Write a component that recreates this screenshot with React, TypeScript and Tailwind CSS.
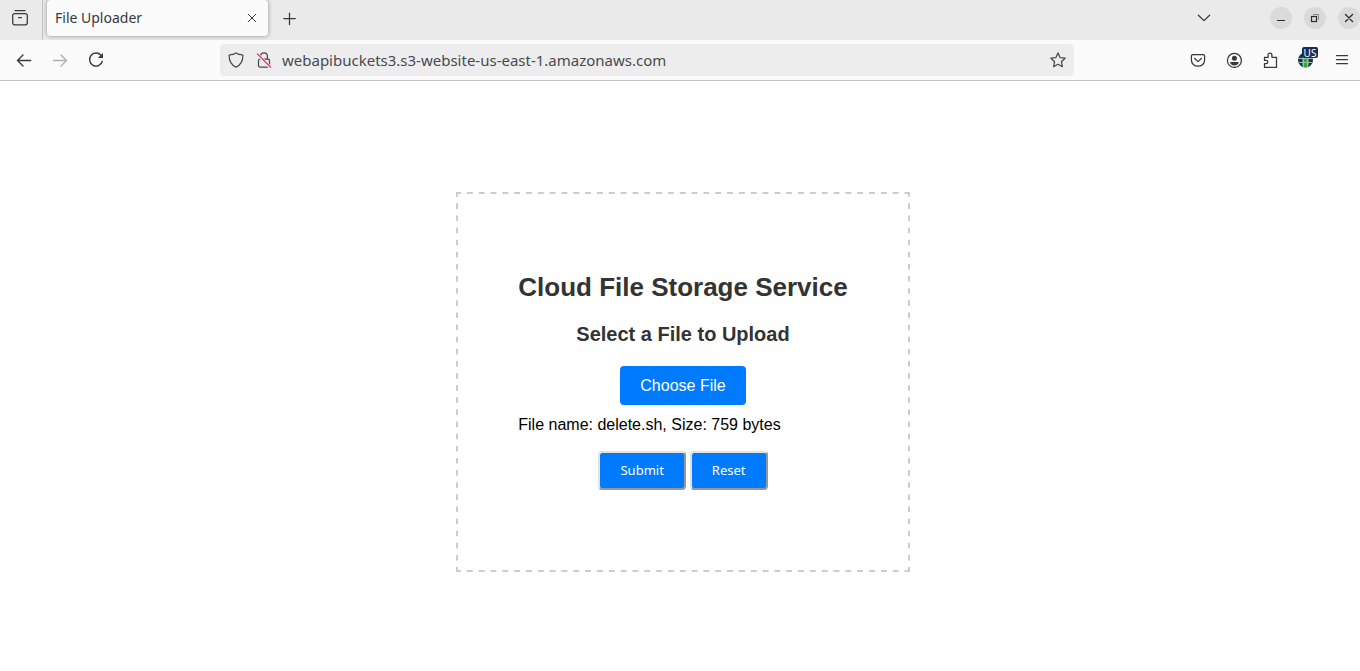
import { useRef, useState } from "react";
import type { ReactNode } from "react";

function Icon({ children, className = "" }: { children: ReactNode; className?: string }) {
  return (
    <svg
      viewBox="0 0 16 16"
      width="16"
      height="16"
      fill="none"
      stroke="currentColor"
      strokeWidth="1.25"
      strokeLinecap="round"
      strokeLinejoin="round"
      className={className}
      aria-hidden="true"
    >
      {children}
    </svg>
  );
}

function ToolButton({ label, disabled, children }: { label: string; disabled?: boolean; children: ReactNode }) {
  return (
    <button
      type="button"
      aria-label={label}
      disabled={disabled}
      className="flex h-8 w-9 items-center justify-center text-[#38383b] disabled:text-[#b0b0b1]"
    >
      {children}
    </button>
  );
}

function WindowButton({ label, children }: { label: string; children: ReactNode }) {
  return (
    <button
      type="button"
      aria-label={label}
      className="flex size-[22px] items-center justify-center rounded-full bg-[#dadada] text-[#2e2e2e]"
    >
      {children}
    </button>
  );
}

function TabBar() {
  return (
    <div className="flex h-10 bg-[#eaeaea] text-[#38383b]">
      <button
        type="button"
        aria-label="Recent browsing"
        className="flex w-[43px] items-center border-r border-[#c0c0c0] pb-1 pl-3"
      >
        <Icon>
          <path d="M3 .7h10" />
          <rect x=".7" y="3.600" width="14.600" height="11.200" rx="2" />
          <path d="M6.600 7.700h2.800" />
        </Icon>
      </button>
      <div className="ml-1 flex h-9 w-[221px] items-center justify-between rounded bg-[#fbfbfb] pr-2 pl-2 shadow-[0_0_4px_rgba(0,0,0,0.4)]">
        <span className="font-['Noto_Sans',sans-serif] text-sm">File Uploader</span>
        <button type="button" aria-label="Close tab">
          <Icon>
            <path d="M4.200 4.200l7.600 7.600M11.800 4.200l-7.600 7.600" strokeWidth="1" />
          </Icon>
        </button>
      </div>
      <button type="button" aria-label="New tab" className="ml-[14px] flex h-9 items-center">
        <Icon>
          <path d="M7.500 3v11.500M1.800 8.500h11.500" />
        </Icon>
      </button>
      <div className="ml-auto flex h-9 items-center">
        <button type="button" aria-label="List all tabs" className="mr-[58px]">
          <Icon>
            <path d="M2.400 5.200L8 10.600l5.600-5.400" />
          </Icon>
        </button>
        <div className="flex gap-3">
          <WindowButton label="Minimize">
            <Icon>
              <path d="M4 10.500h8" strokeLinecap="butt" strokeWidth="1" />
            </Icon>
          </WindowButton>
          <WindowButton label="Restore">
            <Icon>
              <path d="M6.500 4.500h5v5" stroke="#8a8a8a" strokeWidth="1" strokeLinejoin="miter" />
              <rect x="4.500" y="6.500" width="5" height="5" strokeWidth="1.200" strokeLinejoin="miter" />
            </Icon>
          </WindowButton>
          <WindowButton label="Close">
            <Icon>
              <path d="M4.500 4.500l7 7M11.500 4.500l-7 7" strokeWidth="1.400" />
            </Icon>
          </WindowButton>
        </div>
      </div>
    </div>
  );
}

function AddressBar() {
  const [address, setAddress] = useState("webapibuckets3.s3-website-us-east-1.amazonaws.com");
  return (
    <div className="mx-[106px] flex h-8 min-w-0 flex-1 items-center rounded bg-[#ededed] px-2 text-[#4a4a4d]">
      <Icon className="shrink-0">
        <path d="M8 .9c1.800 1.300 4 1.900 6.400 2 .3 0 .5.2.5.5 0 5.600-2.300 9.600-6.900 11.700C3.400 13 1.100 9 1.100 3.400c0-.3.2-.5.5-.5C4 2.800 6.200 2.200 8 .9z" />
      </Icon>
      <Icon className="ml-3 shrink-0">
        <path d="M4.600 7V4.200a3.400 3.400 0 0 1 6.800 0V7" />
        <rect x="2.500" y="7" width="11" height="8" rx="1.500" />
        <path d="M.9 1.900l13.200 13.200" stroke="#ededed" strokeWidth="3.200" />
        <path d="M1.400 1.900l13.100 13.200" stroke="#e22850" />
      </Icon>
      <input
        type="text"
        aria-label="Address"
        value={address}
        onChange={(event) => setAddress(event.target.value)}
        className="ml-[10px] min-w-0 flex-1 bg-transparent font-['Noto_Sans',sans-serif] text-[15px] outline-none"
      />
      <button type="button" aria-label="Bookmark this page">
        <Icon>
          <path d="M8 .9l2.100 4.700 5 .6-3.700 3.500 1 5L8 12.200l-4.400 2.500 1-5L.9 6.200l5-.6z" />
        </Icon>
      </button>
    </div>
  );
}

function Toolbar() {
  return (
    <div className="flex items-center border-b border-[#c4c4c4] bg-[#fbfbfb] py-1 pl-[6px]">
      <ToolButton label="Back">
        <Icon>
          <path d="M14.600 8.500H1.600M7 3.100L1.500 8.500 7 13.900" strokeWidth="1.400" />
        </Icon>
      </ToolButton>
      <ToolButton label="Forward" disabled>
        <Icon>
          <path d="M1.400 8.500h13M9 3.100l5.500 5.400L9 13.900" strokeWidth="1.400" />
        </Icon>
      </ToolButton>
      <ToolButton label="Reload">
        <Icon>
          <path d="M13 3.300A6.500 6.500 0 1 0 14.300 9.500" strokeWidth="1.400" />
          <path d="M15 1v5.100H9.900z" fill="currentColor" stroke="none" />
        </Icon>
      </ToolButton>
      <AddressBar />
      <ToolButton label="Save to Pocket">
        <Icon>
          <path d="M3 2.500h10c1 0 1.600.6 1.600 1.500v3.900c0 3.700-2.800 6.300-6.600 6.300S1.400 11.600 1.400 7.900V4c0-.9.6-1.500 1.600-1.500z" />
          <path d="M4.700 6.500L8 9.600l3.300-3.100" />
        </Icon>
      </ToolButton>
      <ToolButton label="Account">
        <Icon>
          <circle cx="8.400" cy="8.400" r="7" />
          <circle cx="8.400" cy="6.300" r="2.500" fill="currentColor" stroke="none" />
          <path d="M4.100 9.900h8.600c0 2.200-1.900 3.500-4.300 3.500s-4.300-1.300-4.300-3.500z" fill="currentColor" stroke="none" />
        </Icon>
      </ToolButton>
      <ToolButton label="Extensions">
        <Icon>
          <path d="M2.500 5.300h3.600V2.900a1.900 1.900 0 0 1 3.800 0v2.400h4.600v10h-12v-3.700h1.700a1.600 1.600 0 0 0 0-3.200H2.500z" />
        </Icon>
      </ToolButton>
      <ToolButton label="Location: US">
        <span className="relative">
          <svg viewBox="0 0 16 16" width="16" height="16" fill="none" aria-hidden="true">
            <circle cx="7.500" cy="8" r="7.500" fill="#1c2f55" />
            <path d="M4 4h7v9l-2 2H6l-2-2z" fill="#35a248" />
            <path d="M0 6.500h15M1 10.500h13M5.500 1v14M9.500 1v14" stroke="#9fb9b5" />
          </svg>
          <span className="absolute -top-[5px] left-1 flex h-[11px] w-4 items-center justify-center rounded-[2px] bg-[#162e54] font-['Noto_Sans',sans-serif] text-[10px] leading-none text-white">
            US
          </span>
        </span>
      </ToolButton>
      <ToolButton label="Open menu">
        <Icon>
          <path d="M2.500 3.500h11M2.500 7.500h11M2.500 11.500h11" />
        </Icon>
      </ToolButton>
    </div>
  );
}

const actionButton =
  "h-[39px] rounded border-2 border-t-[#e3e3e3] border-l-[#e3e3e3] border-r-[#979797] border-b-[#979797] bg-[#007bff] px-5 font-['Noto_Sans',sans-serif] text-[13px] text-white";

/* Six-pixel dashes on all four edges, fitted to a whole number of dashes per side. */
const dashedFrame =
  "border-2 border-transparent [background-image:linear-gradient(to_right,#ccc_25%,transparent_25%_75%,#ccc_75%),linear-gradient(to_right,#ccc_25%,transparent_25%_75%,#ccc_75%),linear-gradient(#ccc_25%,transparent_25%_75%,#ccc_75%),linear-gradient(#ccc_25%,transparent_25%_75%,#ccc_75%)] [background-size:12px_2px,12px_2px,2px_12px,2px_12px] [background-repeat:round_no-repeat,round_no-repeat,no-repeat_round,no-repeat_round] [background-position:left_0_top_-2px,left_0_bottom_-2px,left_-2px_top_0,right_-2px_top_0]";

function UploadForm() {
  const input = useRef<HTMLInputElement>(null);
  const [file, setFile] = useState({ name: "delete.sh", size: 759 });

  return (
    <form
      onSubmit={(event) => event.preventDefault()}
      className={`flex flex-col items-center px-[60px] pt-[78px] pb-20 font-['Liberation_Sans',sans-serif] ${dashedFrame}`}
    >
      <h1 className="text-[26px] leading-[30px] font-bold text-[#333333]">Cloud File Storage Service</h1>
      <h2 className="mt-5 text-xl leading-6 font-bold text-[#333333]">Select a File to Upload</h2>
      <button
        type="button"
        onClick={() => input.current?.click()}
        className="mt-5 h-[39px] rounded bg-[#007bff] px-5 text-base text-white"
      >
        Choose File
      </button>
      <input
        ref={input}
        type="file"
        aria-label="File"
        className="hidden"
        onChange={(event) => {
          const chosen = event.target.files?.[0];
          if (chosen) setFile({ name: chosen.name, size: chosen.size });
        }}
      />
      <p className="mt-[10px] self-start text-base leading-5 text-black">
        {`File name: ${file.name}, Size: ${file.size} bytes`}
      </p>
      <div className="mt-4 flex gap-1">
        <button type="submit" className={actionButton}>
          Submit
        </button>
        <button type="reset" className={actionButton}>
          Reset
        </button>
      </div>
    </form>
  );
}

export default function App() {
  return (
    <div className="flex min-h-screen flex-col bg-white">
      <header>
        <TabBar />
        <Toolbar />
      </header>
      <main className="flex flex-1 items-center justify-center pt-3 pl-[6px]">
        <UploadForm />
      </main>
    </div>
  );
}
